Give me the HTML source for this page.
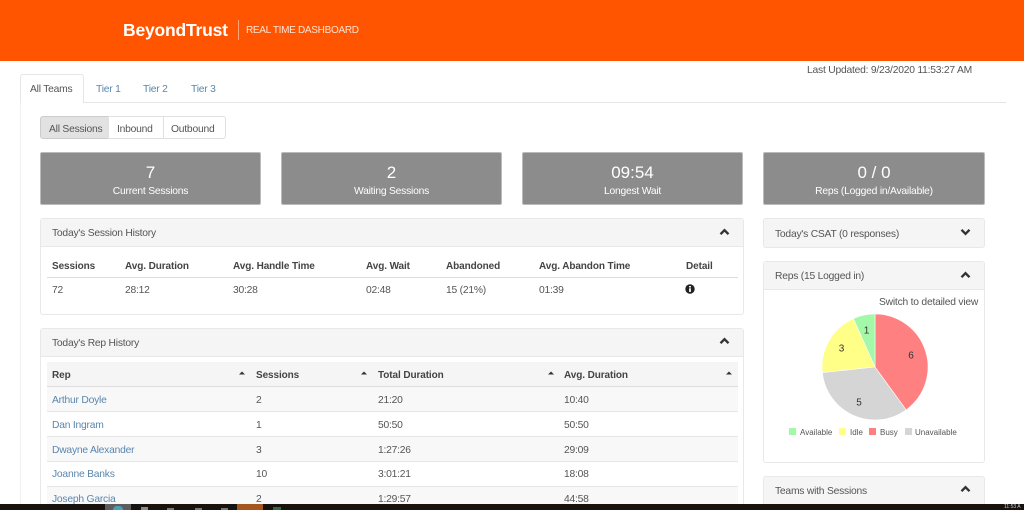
<!DOCTYPE html>
<html lang="en"><head><meta charset="utf-8"><title>Real Time Dashboard</title>
<style>
html,body{margin:0;padding:0;background:#fff}
#p{position:relative;width:1024px;height:510px;overflow:hidden;background:#fff;font-family:"Liberation Sans",sans-serif;font-size:10.3px;letter-spacing:-.22px;color:#555;filter:blur(.35px)}
#p div,#p a{position:absolute;white-space:nowrap;box-sizing:border-box}
#p [style*="line-height:14px"]{margin-top:1px}
a{color:#5b86ad;text-decoration:none}
#p .b{font-weight:bold;color:#444;font-size:10px;letter-spacing:-.1px}
.stat{height:53px;top:152px;width:221px;background:#8c8c8c;border:1px solid #bbb;border-radius:2px;color:#fff;text-align:center}
.stat .n{left:0;right:0;top:10px;font-size:17px;line-height:20px;letter-spacing:0}
.stat .l{left:0;right:0;top:32px;line-height:14px}
.panel{border:1px solid #e8e8e8;border-radius:3px;background:#fff}
.ph{left:0;right:0;top:0;height:28px;background:#f5f5f5;border-bottom:1px solid #e8e8e8}
.line{height:1px;background:#e6e6e6}
.stripe{left:47px;width:691px;background:#f8f8f8}
svg{position:absolute;display:block}
</style></head><body><div id="p">
<div style="left:0;top:0;width:1024px;height:61px;background:#ff5500"></div>
<div style="left:123px;top:20px;font-size:17.5px;font-weight:bold;color:#fff;letter-spacing:-.2px;line-height:21px">BeyondTrust</div>
<div style="left:238px;top:20px;width:1px;height:20px;background:#ffa477"></div>
<div style="left:246px;top:23px;font-size:10px;color:#ffe3d4;letter-spacing:-.3px;line-height:14px">REAL TIME DASHBOARD</div>

<div style="left:807px;top:63px;line-height:14px;color:#555">Last Updated: 9/23/2020 11:53:27 AM</div>

<div style="left:20px;top:102px;width:986px;height:1px;background:#e6e6e6"></div>
<div style="left:20px;top:74px;width:64px;height:29px;background:#fff;border:1px solid #e6e6e6;border-bottom:0;border-radius:3px 3px 0 0"></div>
<div style="left:20px;top:103px;width:1px;height:401px;background:#f0f0f0"></div>
<div style="left:30px;top:82px;line-height:14px">All Teams</div>
<a style="left:96px;top:82px;line-height:14px">Tier 1</a>
<a style="left:143px;top:82px;line-height:14px">Tier 2</a>
<a style="left:191px;top:82px;line-height:14px">Tier 3</a>

<div style="left:40px;top:116px;width:69px;height:23px;background:#e2e2e2;border:1px solid #ccc;border-radius:3px 0 0 3px"></div>
<div style="left:108px;top:116px;width:56px;height:23px;border:1px solid #e0e0e0"></div>
<div style="left:163px;top:116px;width:63px;height:23px;border:1px solid #e0e0e0;border-radius:0 3px 3px 0"></div>
<div style="left:49px;top:122px;line-height:14px">All Sessions</div>
<div style="left:117px;top:122px;line-height:14px">Inbound</div>
<div style="left:171px;top:122px;line-height:14px">Outbound</div>

<div class="stat" style="left:40px"><div class="n">7</div><div class="l">Current Sessions</div></div>
<div class="stat" style="left:281px"><div class="n">2</div><div class="l">Waiting Sessions</div></div>
<div class="stat" style="left:522px"><div class="n">09:54</div><div class="l">Longest Wait</div></div>
<div class="stat" style="left:763px;width:222px"><div class="n">0 / 0</div><div class="l">Reps (Logged in/Available)</div></div>

<!-- Session history -->
<div class="panel" style="left:40px;top:218px;width:704px;height:97px"><div class="ph"></div></div>
<div style="left:52px;top:226px;line-height:14px">Today's Session History</div>
<svg style="left:719px;top:228px" width="11" height="8" viewBox="0 0 11 8"><path d="M1.5 6.200L5.500 2.200L9.500 6.200" fill="none" stroke="#333" stroke-width="2.400"/></svg>
<div class="b" style="left:52px;top:259px;line-height:14px">Sessions</div>
<div class="b" style="left:125px;top:259px;line-height:14px">Avg. Duration</div>
<div class="b" style="left:233px;top:259px;line-height:14px">Avg. Handle Time</div>
<div class="b" style="left:366px;top:259px;line-height:14px">Avg. Wait</div>
<div class="b" style="left:446px;top:259px;line-height:14px">Abandoned</div>
<div class="b" style="left:539px;top:259px;line-height:14px">Avg. Abandon Time</div>
<div class="b" style="left:686px;top:259px;line-height:14px">Detail</div>
<div class="line" style="left:47px;top:277px;width:691px;background:#ddd"></div>
<div style="left:52px;top:283px;line-height:14px">72</div>
<div style="left:125px;top:283px;line-height:14px">28:12</div>
<div style="left:233px;top:283px;line-height:14px">30:28</div>
<div style="left:366px;top:283px;line-height:14px">02:48</div>
<div style="left:446px;top:283px;line-height:14px">15 (21%)</div>
<div style="left:539px;top:283px;line-height:14px">01:39</div>
<svg style="left:685px;top:284px" width="10" height="10" viewBox="0 0 10 10"><circle cx="5" cy="5" r="4.700" fill="#222"/><rect x="4.100" y="4.300" width="1.800" height="3.600" fill="#fff"/><rect x="4.100" y="2" width="1.800" height="1.500" fill="#fff"/></svg>

<!-- Rep history -->
<div class="panel" style="left:40px;top:328px;width:704px;height:190px"><div class="ph"></div></div>
<div style="left:52px;top:336px;line-height:14px">Today's Rep History</div>
<svg style="left:719px;top:337px" width="11" height="8" viewBox="0 0 11 8"><path d="M1.5 6.200L5.500 2.200L9.500 6.200" fill="none" stroke="#333" stroke-width="2.400"/></svg>
<div class="stripe" style="top:362px;height:24px;background:#f5f5f5"></div>
<div class="line" style="left:47px;top:386px;width:691px;background:#ddd"></div>
<div class="b" style="left:52px;top:368px;line-height:14px">Rep</div>
<div class="b" style="left:256px;top:368px;line-height:14px">Sessions</div>
<div class="b" style="left:378px;top:368px;line-height:14px">Total Duration</div>
<div class="b" style="left:564px;top:368px;line-height:14px">Avg. Duration</div>
<svg style="left:239px;top:371px" width="6" height="4"><path d="M0 3.500L3 .5L6 3.500Z" fill="#333"/></svg>
<svg style="left:361px;top:371px" width="6" height="4"><path d="M0 3.500L3 .5L6 3.500Z" fill="#333"/></svg>
<svg style="left:548px;top:371px" width="6" height="4"><path d="M0 3.500L3 .5L6 3.500Z" fill="#333"/></svg>
<svg style="left:726px;top:371px" width="6" height="4"><path d="M0 3.500L3 .5L6 3.500Z" fill="#333"/></svg>

<div class="stripe" style="top:387px;height:24px"></div>
<div class="line" style="left:47px;top:411px;width:691px"></div>
<div class="line" style="left:47px;top:436px;width:691px"></div>
<div class="stripe" style="top:437px;height:24px"></div>
<div class="line" style="left:47px;top:461px;width:691px"></div>
<div class="line" style="left:47px;top:486px;width:691px"></div>
<div class="stripe" style="top:487px;height:18px"></div>

<a style="left:52px;top:393px;line-height:14px">Arthur Doyle</a>
<div style="left:256px;top:393px;line-height:14px">2</div><div style="left:378px;top:393px;line-height:14px">21:20</div><div style="left:564px;top:393px;line-height:14px">10:40</div>
<a style="left:52px;top:418px;line-height:14px">Dan Ingram</a>
<div style="left:256px;top:418px;line-height:14px">1</div><div style="left:378px;top:418px;line-height:14px">50:50</div><div style="left:564px;top:418px;line-height:14px">50:50</div>
<a style="left:52px;top:443px;line-height:14px">Dwayne Alexander</a>
<div style="left:256px;top:443px;line-height:14px">3</div><div style="left:378px;top:443px;line-height:14px">1:27:26</div><div style="left:564px;top:443px;line-height:14px">29:09</div>
<a style="left:52px;top:467px;line-height:14px">Joanne Banks</a>
<div style="left:256px;top:467px;line-height:14px">10</div><div style="left:378px;top:467px;line-height:14px">3:01:21</div><div style="left:564px;top:467px;line-height:14px">18:08</div>
<a style="left:52px;top:492px;line-height:14px">Joseph Garcia</a>
<div style="left:256px;top:492px;line-height:14px">2</div><div style="left:378px;top:492px;line-height:14px">1:29:57</div><div style="left:564px;top:492px;line-height:14px">44:58</div>

<!-- Right column -->
<div class="panel" style="left:763px;top:218px;width:222px;height:30px;background:#f5f5f5"></div>
<div style="left:775px;top:227px;line-height:14px">Today's CSAT (0 responses)</div>
<svg style="left:960px;top:228px" width="11" height="8" viewBox="0 0 11 8"><path d="M1.5 1.800L5.500 5.800L9.500 1.800" fill="none" stroke="#333" stroke-width="2.400"/></svg>

<div class="panel" style="left:763px;top:261px;width:222px;height:202px"><div class="ph"></div></div>
<div style="left:775px;top:269px;line-height:14px">Reps (15 Logged in)</div>
<svg style="left:960px;top:271px" width="11" height="8" viewBox="0 0 11 8"><path d="M1.5 6.200L5.500 2.200L9.500 6.200" fill="none" stroke="#333" stroke-width="2.400"/></svg>
<div style="left:879px;top:295px;line-height:14px">Switch to detailed view</div>

<svg style="left:0;top:0;letter-spacing:0" width="1024" height="510" viewBox="0 0 1024 510">
<path d="M875 367L875 314A53 53 0 0 1 906.15 409.88Z" fill="#ff8080" stroke="#fff" stroke-width=".6"/>
<path d="M875 367L906.15 409.88A53 53 0 0 1 822.3 372.54Z" fill="#d5d5d5" stroke="#fff" stroke-width=".6"/>
<path d="M875 367L822.3 372.54A53 53 0 0 1 853.44 318.58Z" fill="#ffff88" stroke="#fff" stroke-width=".6"/>
<path d="M875 367L853.44 318.58A53 53 0 0 1 875 314Z" fill="#a3f9a8" stroke="#fff" stroke-width=".6"/>
<g font-family="Liberation Sans, sans-serif" font-size="10" fill="#333" text-anchor="middle">
<text x="866.500" y="333.500">1</text><text x="841.500" y="351.500">3</text><text x="911" y="358.500">6</text><text x="859" y="405.500">5</text></g>
<rect x="789" y="428" width="7" height="7" fill="#a3f9a8"/>
<rect x="839" y="428" width="7" height="7" fill="#ffff88"/>
<rect x="869" y="428" width="7" height="7" fill="#ff8080"/>
<rect x="905" y="428" width="7" height="7" fill="#d5d5d5"/>
<g font-family="Liberation Sans, sans-serif" font-size="8" fill="#555">
<text x="800" y="435">Available</text><text x="850" y="435">Idle</text><text x="880" y="435">Busy</text><text x="915" y="435">Unavailable</text></g>
</svg>

<div class="panel" style="left:763px;top:476px;width:222px;height:40px;background:#f5f5f5"></div>
<div style="left:775px;top:484px;line-height:14px">Teams with Sessions</div>
<svg style="left:960px;top:485px" width="11" height="8" viewBox="0 0 11 8"><path d="M1.5 6.200L5.500 2.200L9.500 6.200" fill="none" stroke="#333" stroke-width="2.400"/></svg>

<!-- Taskbar -->
<div style="left:0;top:504px;width:1024px;height:6px;background:#17120d"></div>
<div style="left:105px;top:504px;width:26px;height:6px;background:#5c5c5c"></div>
<div style="left:113px;top:506px;width:10px;height:4px;border-radius:5px 5px 0 0;background:#4d9fb5"></div>
<div style="left:237px;top:504px;width:26px;height:6px;background:#a5561f"></div>
<div style="left:141px;top:507px;width:7px;height:3px;background:#8a8a8a"></div>
<div style="left:167px;top:508px;width:7px;height:2px;background:#777"></div>
<div style="left:195px;top:508px;width:7px;height:2px;background:#777"></div>
<div style="left:221px;top:508px;width:7px;height:2px;background:#777"></div>
<div style="left:273px;top:507px;width:8px;height:3px;background:#2f6b3f"></div>
<div style="left:1004px;top:505px;font-size:5px;line-height:5px;color:#ccc;letter-spacing:0">11:53 A</div>
</div></body></html>
